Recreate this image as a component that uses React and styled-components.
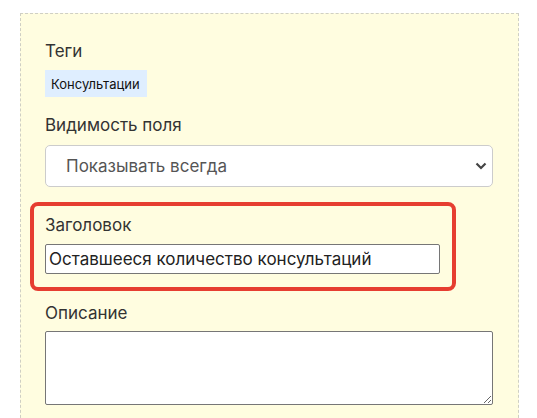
import React from "react";
import styled, { createGlobalStyle } from "styled-components";

const GlobalStyle = createGlobalStyle`
  html, body {
    margin: 0;
    padding: 0;
    background: #ffffff;
  }
  body {
    font-family: Inter, "Noto Sans", Arial, sans-serif;
  }
`;

const Page = styled.div`
  padding: 13px 0 0 20px;
  height: 418px;
  box-sizing: border-box;
  overflow: hidden;
`;

const Panel = styled.div`
  width: 499px;
  min-height: 420px;
  box-sizing: border-box;
  background: #fffde0;
  border: 1px dashed #cfcfc4;
  border-bottom: none;
  padding: 25px 0 0 24px;
  display: flex;
  flex-direction: column;
  align-items: flex-start;
`;

const Label = styled.div`
  font-size: 17px;
  line-height: 24px;
  color: #333333;
  margin-bottom: ${(p) => p.$gap || 7}px;
`;

const Field = styled.div`
  display: flex;
  flex-direction: column;
  align-items: flex-start;
  margin-bottom: ${(p) => p.$after || 0}px;
`;

const Tag = styled.span`
  display: inline-flex;
  align-items: center;
  height: 27px;
  padding: 0 7px 0 6px;
  background: #dfeeff;
  color: #111111;
  font-size: 13px;
`;

const SelectWrap = styled.div`
  position: relative;
  width: 448px;
`;

const Select = styled.select`
  appearance: none;
  width: 100%;
  height: 42px;
  box-sizing: border-box;
  border: 1px solid #cccccc;
  border-radius: 5px;
  background: #ffffff;
  padding: 0 30px 0 20px;
  font-family: inherit;
  font-size: 17px;
  color: #555555;
`;

const Chevron = styled.svg`
  position: absolute;
  right: 6px;
  top: 17px;
  pointer-events: none;
`;

const Highlight = styled.div`
  width: 426px;
  margin-left: -15px;
  box-sizing: border-box;
  border: 4px solid #e63e31;
  border-radius: 8px;
  padding: 7px 13px 13px 11px;
  margin-bottom: 10px;
`;

const TextInput = styled.input`
  width: 395px;
  height: 30px;
  box-sizing: border-box;
  border: 1px solid #767676;
  border-radius: 2px;
  background: #ffffff;
  padding: 0 3px;
  font-family: inherit;
  font-size: 17px;
  color: #222222;
`;

const TextArea = styled.textarea`
  width: 448px;
  height: 74px;
  box-sizing: border-box;
  border: 1px solid #767676;
  border-radius: 2px;
  background: #ffffff;
  font-family: inherit;
  font-size: 17px;
  display: block;
`;

export default function App() {
  return (
    <>
      <GlobalStyle />
      <Page>
        <Panel>
          <Field $after={16}>
            <Label>Теги</Label>
            <Tag>Консультации</Tag>
          </Field>
          <Field $after={15}>
            <Label $gap={8}>Видимость поля</Label>
            <SelectWrap>
              <Select defaultValue="always">
                <option value="always">Показывать всегда</option>
              </Select>
              <Chevron width="12" height="8" viewBox="0 0 12 8">
                <path d="M1.5 1.5 L6 6 L10.5 1.5" fill="none" stroke="#444" strokeWidth="2.2" />
              </Chevron>
            </SelectWrap>
          </Field>
          <Highlight>
            <Label>Заголовок</Label>
            <TextInput defaultValue="Оставшееся количество консультаций" />
          </Highlight>
          <Field>
            <Label $gap={6}>Описание</Label>
            <TextArea />
          </Field>
        </Panel>
      </Page>
    </>
  );
}
